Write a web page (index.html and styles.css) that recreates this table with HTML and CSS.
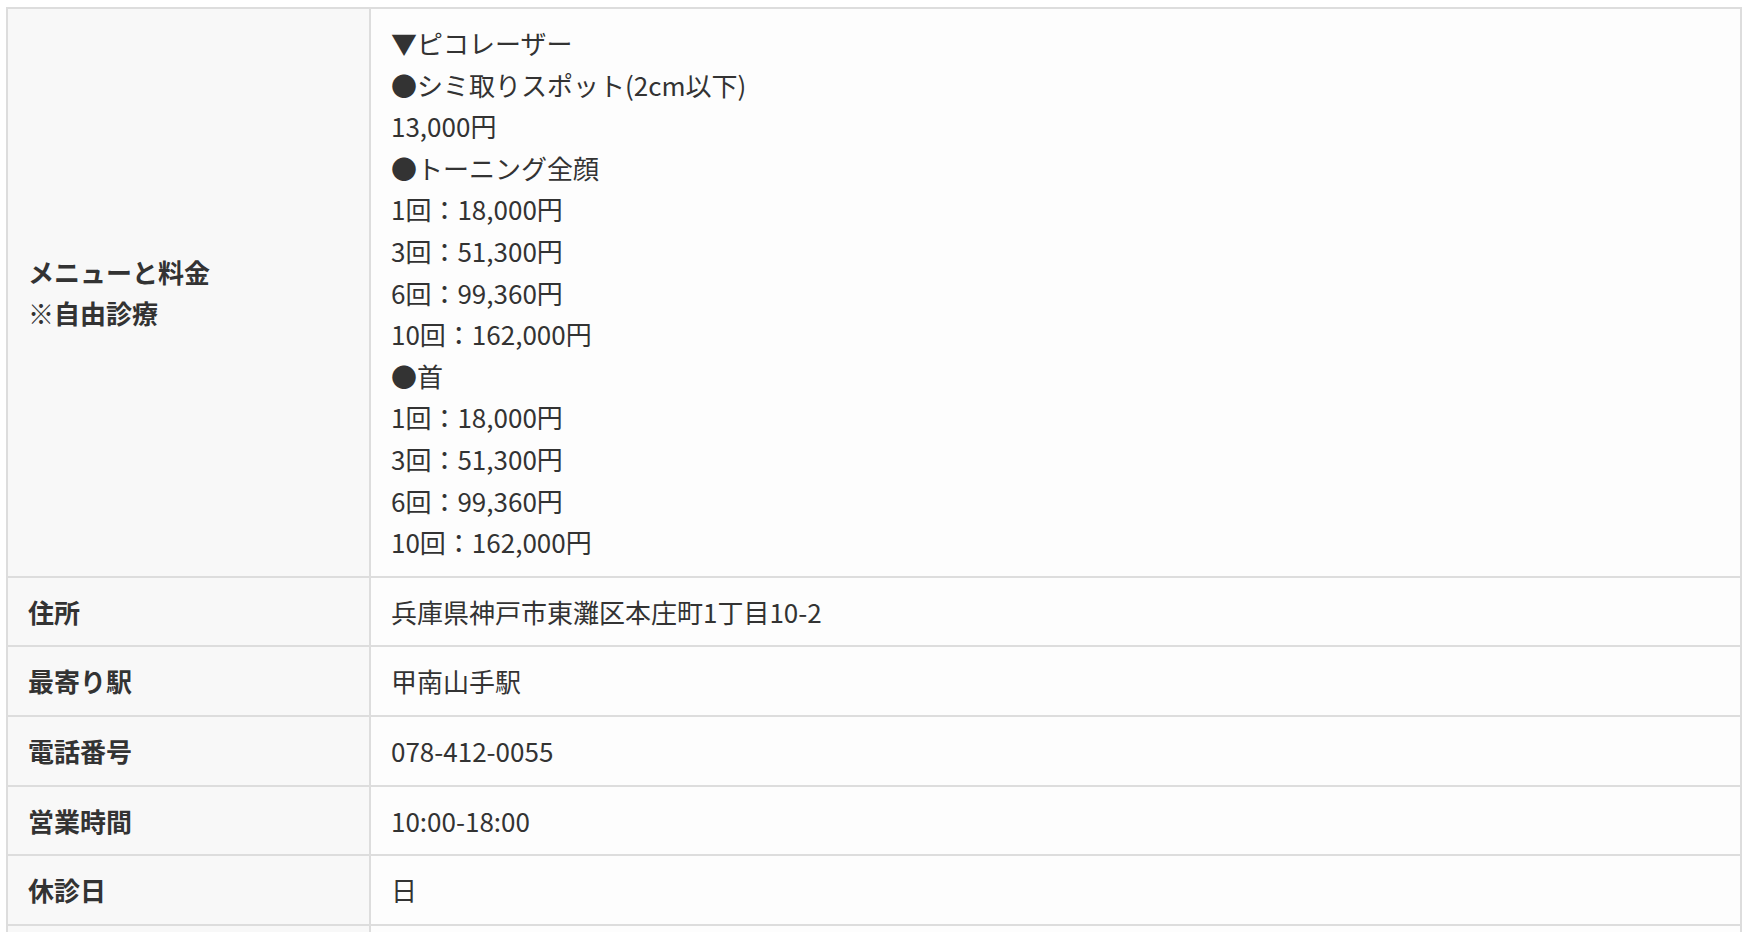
FILE: index.html
```html
<!DOCTYPE html>
<html lang="ja">
<head>
    <meta charset="UTF-8">
    <meta name="viewport" content="width=device-width, initial-scale=1.0">
    <title>クリニック情報</title>
    <link rel="stylesheet" href="styles.css">
</head>
<body>
    <div class="wrap">
        <table class="info-table">
            <tr>
                <th>メニューと料金<br>※自由診療</th>
                <td>
                    ▼ピコレーザー<br>
                    ●シミ取りスポット(2cm以下)<br>
                    13,000円<br>
                    ●トーニング全顔<br>
                    1回：18,000円<br>
                    3回：51,300円<br>
                    6回：99,360円<br>
                    10回：162,000円<br>
                    ●首<br>
                    1回：18,000円<br>
                    3回：51,300円<br>
                    6回：99,360円<br>
                    10回：162,000円
                </td>
            </tr>
            <tr>
                <th>住所</th>
                <td>兵庫県神戸市東灘区本庄町1丁目10-2</td>
            </tr>
            <tr>
                <th>最寄り駅</th>
                <td>甲南山手駅</td>
            </tr>
            <tr>
                <th>電話番号</th>
                <td>078-412-0055</td>
            </tr>
            <tr>
                <th>営業時間</th>
                <td>10:00-18:00</td>
            </tr>
            <tr>
                <th>休診日</th>
                <td>日</td>
            </tr>
            <tr class="spacer-row">
                <th></th>
                <td></td>
            </tr>
        </table>
    </div>
</body>
</html>
```

FILE: styles.css
```css
* {
    margin: 0;
    padding: 0;
    box-sizing: border-box;
}

body {
    background: #fff;
    color: #333;
    font-family: "Noto Sans CJK JP", "Noto Sans", sans-serif;
    font-size: 26px;
    line-height: 1.6;
}

.wrap {
    padding: 7px 8px 0 6px;
}

.info-table {
    width: 100%;
    border: 1px solid #ddd;
    border-collapse: separate;
    border-spacing: 0;
}

.info-table th,
.info-table td {
    border: 1px solid #ddd;
    padding: 13px 20px;
    vertical-align: middle;
    text-align: left;
}

.info-table th {
    width: 363px;
    background: #f8f8f8;
    font-weight: bold;
}

.info-table td {
    background: #fdfdfd;
    font-weight: normal;
}

.spacer-row th,
.spacer-row td {
    height: 70px;
}
```
